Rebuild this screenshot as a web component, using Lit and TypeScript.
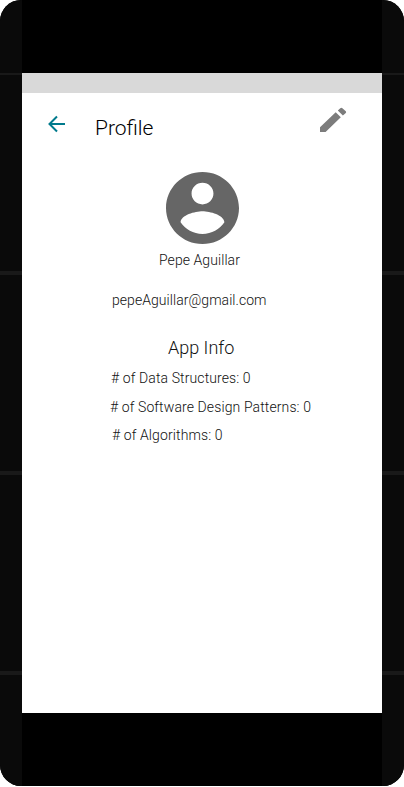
import { LitElement, html, css } from "lit";
import { customElement, property } from "lit/decorators.js";

@customElement("side-rail")
class SideRail extends LitElement {
  static styles = css`
    :host { display: grid; width: 22px; height: 786px; background: #0a0a0a; grid-template-rows: 73px 2px 196px 4px 196px 4px 196px 4px 1fr; }
    .seam { background: #191919; }
  `;
  render() {
    return html`<span></span><span class="seam"></span><span></span><span class="seam"></span><span></span><span class="seam"></span><span></span><span class="seam"></span><span></span>`;
  }
}

@customElement("profile-screen")
class ProfileScreen extends LitElement {
  @property() name = "Pepe Aguillar";
  @property() email = "pepeAguillar@gmail.com";

  static styles = css`
    :host { display: flex; flex-direction: column; height: 640px; background: #fff; color: #111; font: 300 14px/20px Roboto, sans-serif; }
    .status { height: 20px; background: #d9d9d9; flex: none; }
    header { display: flex; height: 75px; padding: 0 35px 0 26px; align-items: flex-start; color: #000; }
    svg { display: block; flex: none; }
    .back { margin-top: 22px; }
    h1 { margin: 20px auto 0 30px; font-size: 21px; line-height: 30px; font-weight: 300; }
    .edit { margin-top: 14px; }
    .avatar { margin: 4px 0 0 144px; }
    .name { margin: 6px 0 0 137px; letter-spacing: 0.07px; }
    .email { margin: 20px 0 0 90px; letter-spacing: 0.05px; }
    h2 { margin: 26px 0 0 146px; font-size: 18px; line-height: 24px; font-weight: 300; }
    .stats { display: flex; flex-direction: column; gap: 8.5px; margin-top: 8px; white-space: nowrap; letter-spacing: 0.11px; }
    .structures { margin-left: 89px; }
    .patterns { margin-left: 88px; }
    .algorithms { margin-left: 90px; }
  `;

  render() {
    return html`
      <div class="status"></div>
      <header>
        <svg class="back" width="17" height="18" viewBox="0 0 17 18" fill="none" stroke="#007a8c" stroke-width="2">
          <path d="M17 9H2M9 1.5 1.5 9 9 16.5" />
        </svg>
        <h1>Profile</h1>
        <svg class="edit" width="27" height="26" viewBox="0 0 27 26" fill="#7c7c7c">
          <path d="M0 20.2 15.7 5.3 20.8 10.3 5.6 25H0zM17.8 3.6 20.3 1.3Q21.3.4 22.4 1.3L25.8 4.2Q26.6 5 25.8 5.9L22.9 8.5z" />
        </svg>
      </header>
      <svg class="avatar" width="73" height="72" viewBox="2 2 20 20" preserveAspectRatio="none" fill="#666">
        <path d="M12 2C6.48 2 2 6.48 2 12s4.48 10 10 10 10-4.48 10-10S17.52 2 12 2zm0 3c1.66 0 3 1.34 3 3s-1.34 3-3 3-3-1.34-3-3 1.34-3 3-3zm0 14.2c-2.5 0-4.71-1.28-6-3.22.03-1.99 4-3.08 6-3.08 1.99 0 5.97 1.09 6 3.08-1.29 1.94-3.5 3.22-6 3.22z" />
      </svg>
      <div class="name">${this.name}</div>
      <div class="email">${this.email}</div>
      <h2>App Info</h2>
      <div class="stats">
        <div class="structures"># of Data Structures: 0</div>
        <div class="patterns"># of Software Design Patterns: 0</div>
        <div class="algorithms"># of Algorithms: 0</div>
      </div>
    `;
  }
}

@customElement("app-root")
class AppRoot extends LitElement {
  static styles = css`
    :host { display: block; height: 787px; background: #fff; }
    .phone { display: grid; grid-template-columns: 22px 360px 22px; height: 786px; border-radius: 21px; overflow: hidden; background: #000; }
    profile-screen { margin-top: 73px; }
  `;
  render() {
    return html`<div class="phone"><side-rail></side-rail><profile-screen></profile-screen><side-rail></side-rail></div>`;
  }
}
